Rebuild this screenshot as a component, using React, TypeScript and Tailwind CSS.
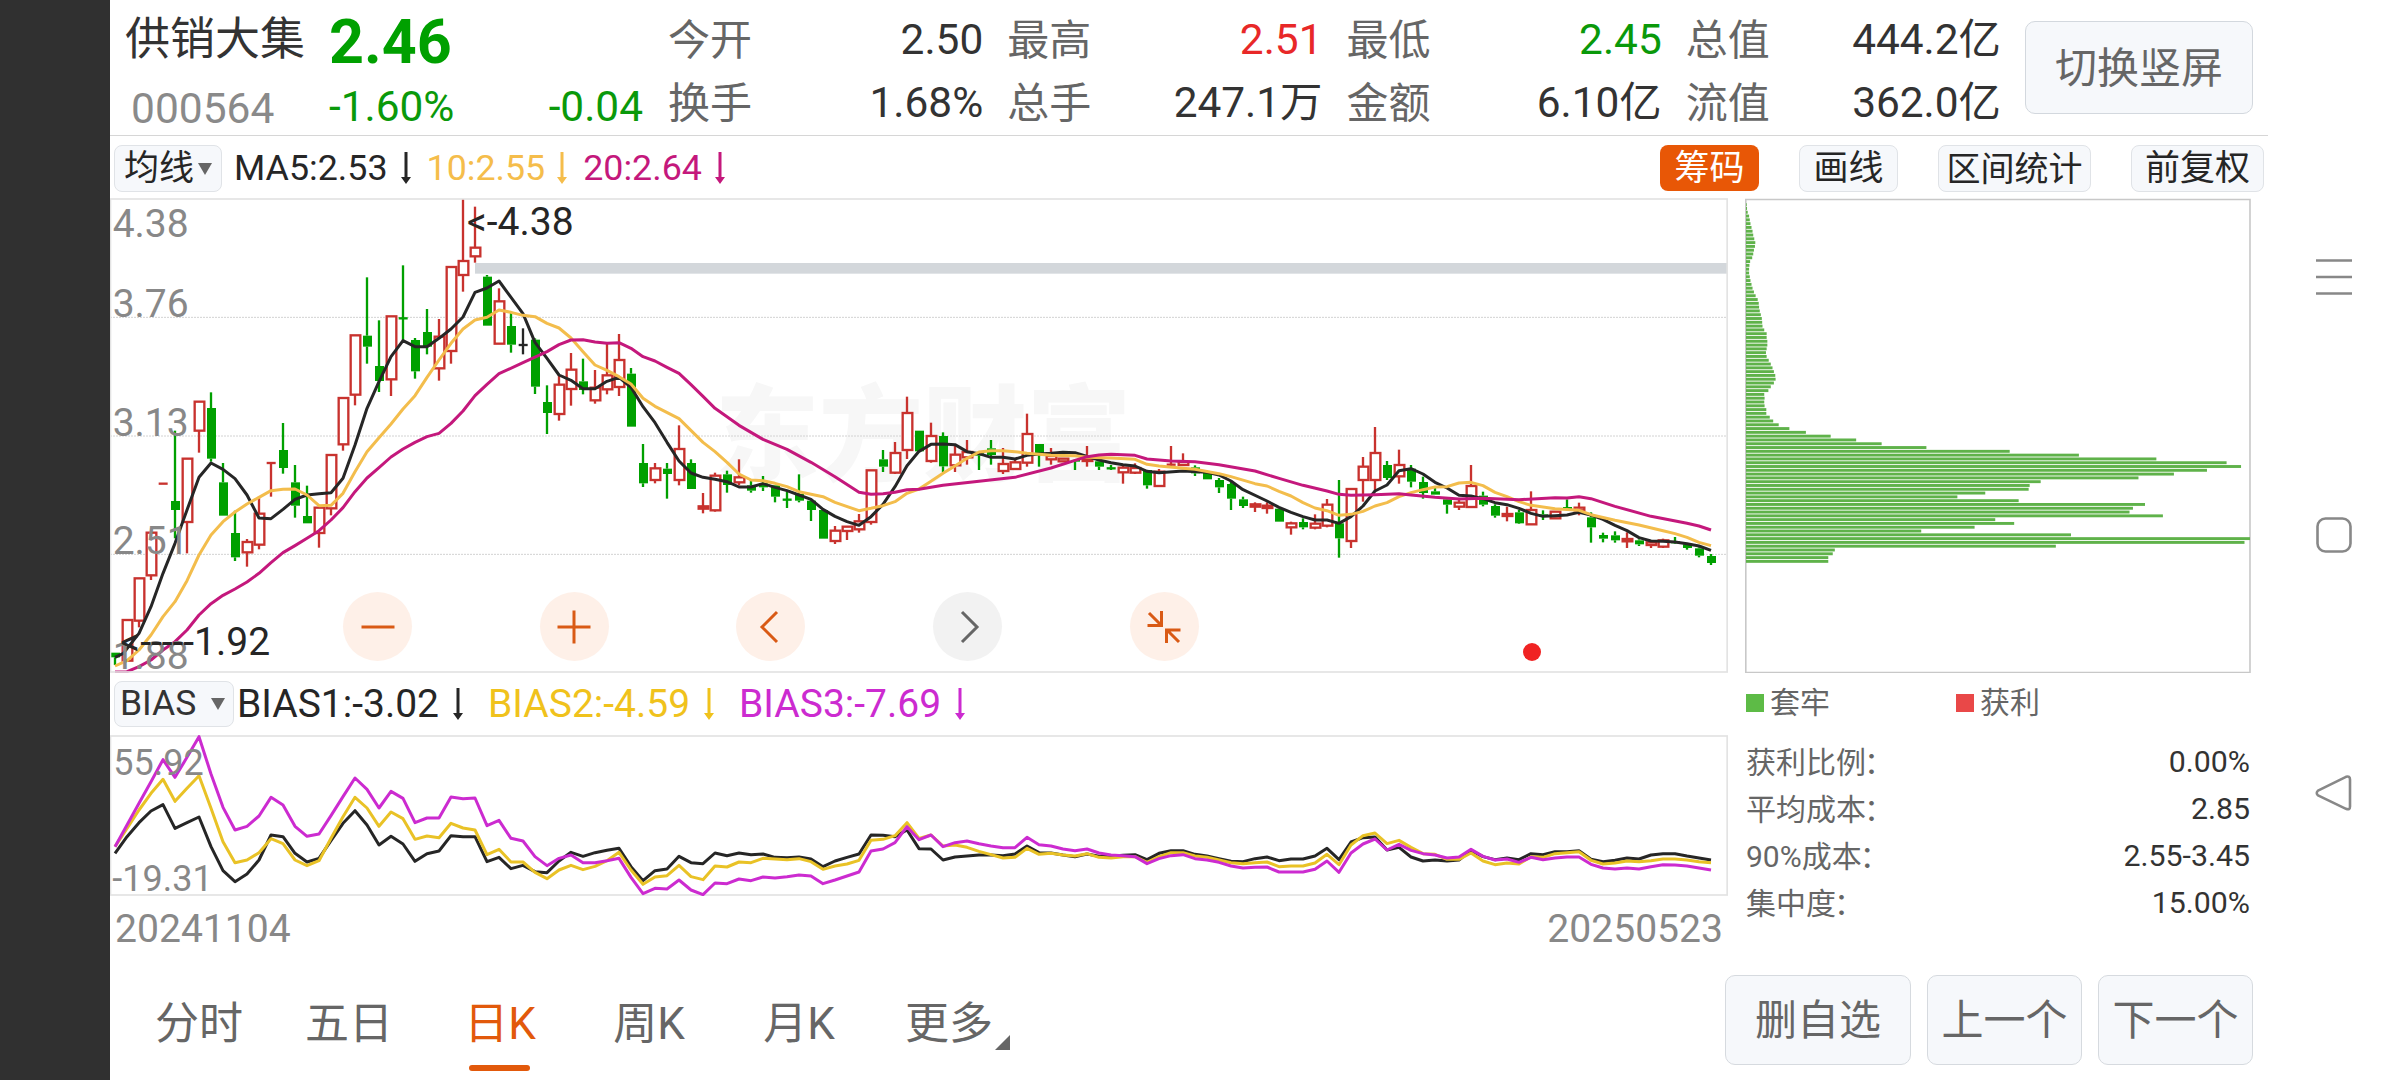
import React from 'react';

type CandleKind = 'up' | 'down' | 'flat';
// body top, body bottom, high, low (plot units, 3 per pixel)
type Candle = [CandleKind, number, number, number, number];

const CANDLES: Candle[] = [
  ['down', 1388, 1402, 1388, 1425], ['up', 1290, 1412, 1290, 1412], ['up', 1165, 1292, 1165, 1312],
  ['up', 1028, 1156, 1028, 1170], ['up', 881, 881, 881, 881], ['down', 933, 960, 722, 1045],
  ['up', 806, 996, 806, 1090], ['up', 635, 722, 635, 788], ['down', 654, 806, 607, 815],
  ['down', 877, 977, 819, 977], ['down', 1029, 1102, 962, 1113], ['up', 1056, 1087, 1047, 1130],
  ['up', 971, 1064, 920, 1078], ['up', 819, 819, 819, 920], ['down', 780, 834, 699, 851],
  ['down', 877, 947, 825, 983], ['down', 978, 1000, 887, 1000], ['up', 953, 1029, 953, 1073],
  ['up', 795, 955, 795, 976], ['up', 624, 763, 624, 782], ['up', 436, 614, 436, 646],
  ['down', 437, 470, 262, 521], ['down', 528, 573, 391, 606], ['up', 379, 568, 379, 618],
  ['down', 385, 385, 226, 450], ['down', 450, 544, 444, 566], ['down', 426, 470, 357, 493],
  ['up', 440, 535, 387, 572], ['up', 231, 483, 231, 521], ['up', 213, 255, 27, 305],
  ['up', 173, 199, 50, 218], ['down', 260, 407, 255, 407], ['up', 334, 461, 295, 461],
  ['down', 408, 464, 365, 488], ['flat', 465, 465, 415, 493], ['down', 449, 590, 445, 612],
  ['down', 636, 669, 586, 732], ['up', 584, 672, 553, 692], ['up', 539, 597, 489, 647],
  ['down', 574, 600, 506, 613], ['up', 593, 631, 540, 641], ['up', 556, 598, 460, 613],
  ['up', 510, 591, 432, 618], ['down', 551, 710, 534, 710], ['down', 819, 880, 762, 891],
  ['up', 835, 870, 819, 880], ['down', 836, 852, 819, 926], ['up', 777, 870, 706, 886],
  ['down', 819, 897, 808, 897], ['up', 949, 956, 909, 970], ['up', 857, 961, 848, 965],
  ['down', 853, 885, 842, 908], ['up', 862, 877, 808, 886], ['down', 886, 902, 870, 908],
  ['down', 880, 892, 858, 903], ['down', 886, 920, 886, 937], ['down', 929, 929, 905, 954],
  ['down', 912, 932, 853, 937], ['down', 932, 960, 930, 993], ['down', 960, 1046, 960, 1046],
  ['up', 1022, 1053, 1008, 1062], ['up', 1010, 1023, 1010, 1050], ['up', 994, 1018, 972, 1028],
  ['up', 841, 996, 841, 1004], ['down', 808, 830, 780, 846], ['up', 789, 848, 756, 852],
  ['up', 669, 780, 620, 807], ['down', 722, 784, 722, 784], ['up', 738, 813, 698, 818],
  ['down', 738, 829, 727, 846], ['up', 794, 826, 768, 846], ['up', 786, 802, 750, 824],
  ['down', 790, 797, 790, 840], ['down', 775, 795, 750, 824], ['up', 822, 843, 774, 852],
  ['up', 817, 837, 810, 840], ['up', 732, 818, 671, 830], ['down', 762, 790, 762, 830],
  ['up', 798, 808, 774, 824], ['up', 806, 814, 804, 816], ['down', 810, 815, 808, 840],
  ['up', 806, 813, 768, 830], ['down', 814, 830, 814, 840], ['down', 835, 835, 825, 840],
  ['up', 833, 847, 825, 881], ['up', 834, 848, 820, 852], ['down', 840, 886, 840, 896],
  ['up', 845, 888, 837, 888], ['up', 824, 824, 768, 832], ['up', 816, 825, 790, 826],
  ['down', 832, 850, 826, 858], ['down', 847, 868, 847, 868], ['down', 870, 892, 864, 909],
  ['down', 882, 926, 876, 960], ['down', 928, 948, 920, 954], ['up', 943, 950, 937, 966],
  ['up', 947, 954, 937, 971], ['down', 956, 995, 956, 995], ['up', 1000, 1012, 995, 1034],
  ['down', 996, 1012, 985, 1018], ['up', 1001, 1013, 973, 1018], ['up', 944, 1007, 927, 1012],
  ['down', 1000, 1045, 870, 1103], ['up', 897, 1053, 897, 1074], ['up', 830, 870, 801, 935],
  ['up', 789, 870, 711, 900], ['down', 825, 864, 813, 870], ['up', 825, 859, 779, 881],
  ['down', 836, 875, 825, 892], ['down', 876, 909, 860, 926], ['down', 904, 914, 892, 914],
  ['down', 928, 944, 922, 971], ['up', 938, 950, 930, 960], ['up', 888, 951, 825, 951],
  ['down', 917, 944, 905, 949], ['down', 948, 977, 943, 983], ['up', 972, 978, 950, 994],
  ['down', 967, 1000, 960, 1002], ['up', 960, 1003, 904, 1003], ['down', 973, 980, 961, 990],
  ['up', 965, 985, 965, 985], ['down', 951, 958, 928, 960], ['up', 953, 961, 938, 976],
  ['down', 982, 1012, 967, 1058], ['down', 1035, 1046, 1028, 1057], ['down', 1036, 1051, 1024, 1058],
  ['up', 1047, 1054, 1027, 1074], ['down', 1051, 1063, 1048, 1068], ['up', 1057, 1065, 1056, 1074],
  ['up', 1051, 1070, 1046, 1074], ['down', 1054, 1060, 1041, 1062], ['down', 1063, 1074, 1060, 1079],
  ['down', 1075, 1097, 1072, 1102], ['down', 1098, 1119, 1092, 1125],
];

const MA5 =
  '15,1402 40,1390 87,1330 123,1250 159,1150 195,1060 231,960 267,862 303,819 339,838 375,866 411,915 447,984 483,986 519,958 555,928 591,915 627,911 663,908 699,865 735,765 771,655 807,575 843,500 879,452 915,470 951,470 987,445 1023,417 1059,381 1095,307 1131,294 1167,273 1239,371 1275,457 1311,505 1347,555 1383,571 1419,596 1455,596 1491,574 1527,562 1563,592 1599,650 1635,698 1671,757 1707,813 1743,849 1779,862 1815,868 1851,875 1887,891 1923,891 1959,881 1995,892 2031,902 2067,915 2103,928 2139,958 2175,979 2211,995 2247,1006 2283,980 2319,943 2355,890 2391,827 2427,784 2463,763 2499,762 2535,764 2571,785 2607,791 2643,802 2679,802 2715,807 2751,796 2787,792 2823,790 2859,787 2895,788 2931,799 2967,810 3003,818 3039,824 3075,828 3111,844 3147,848 3219,843 3291,847 3327,855 3363,873 3399,899 3471,933 3507,952 3543,967 3579,980 3615,990 3651,990 3687,1000 3723,980 3759,948 3795,903 3831,885 3867,842 3903,836 3939,852 3975,877 4011,894 4047,916 4083,918 4119,926 4155,938 4191,944 4227,955 4263,970 4299,979 4335,977 4371,975 4407,967 4443,975 4479,988 4515,1006 4551,1022 4587,1043 4623,1053 4659,1054 4695,1056 4731,1061 4767,1068 4803,1081';
const MA10 =
  '15,1428 51,1412 87,1380 123,1335 159,1280 195,1235 231,1172 267,1095 303,1035 339,995 375,966 411,942 447,922 483,902 519,898 555,897 591,915 627,947 663,946 699,910 735,845 771,785 807,743 843,702 879,657 915,617 951,562 987,510 1023,460 1059,417 1095,390 1131,382 1167,360 1203,367 1239,376 1275,380 1311,400 1347,414 1383,444 1419,485 1455,525 1491,541 1527,560 1563,582 1599,625 1635,649 1707,686 1779,757 1815,785 1851,817 1887,852 1923,870 1959,872 1995,880 2031,890 2067,905 2139,920 2175,937 2247,962 2283,955 2319,947 2355,935 2391,910 2427,897 2463,874 2499,850 2535,828 2571,805 2607,786 2643,782 2679,782 2715,785 2751,790 2823,796 2895,797 2931,802 3003,804 3075,808 3111,823 3147,828 3219,835 3255,838 3327,851 3363,860 3435,881 3471,888 3507,904 3543,918 3579,938 3615,954 3651,962 3687,976 3723,973 3759,964 3795,948 3831,938 3867,920 3903,908 3939,899 3975,891 4011,890 4047,879 4083,877 4119,887 4155,907 4191,920 4227,935 4263,946 4335,956 4407,961 4443,974 4515,991 4587,1005 4659,1022 4695,1031 4731,1042 4767,1057 4803,1067';
const MA20 =
  '15,1446 51,1445 87,1430 123,1410 159,1380 195,1355 231,1320 267,1275 303,1241 339,1216 375,1197 411,1176 447,1150 483,1118 519,1088 555,1067 591,1045 627,1022 663,990 699,953 735,905 771,864 807,833 843,801 879,777 915,757 951,740 987,730 1023,700 1059,663 1095,617 1131,583 1167,551 1239,518 1311,485 1347,464 1383,450 1419,449 1455,456 1491,460 1527,458 1563,475 1599,500 1635,513 1671,532 1707,550 1743,584 1779,619 1815,655 1851,680 1887,706 1959,748 2031,778 2103,817 2175,860 2247,907 2283,913 2319,911 2355,907 2391,899 2427,898 2499,886 2607,874 2715,862 2823,834 2895,811 2931,800 2967,795 3003,793 3075,796 3111,807 3183,813 3255,815 3327,824 3435,843 3510,866 3579,886 3651,903 3687,913 3723,916 3795,914 3867,911 3903,915 3975,922 4047,927 4119,925 4227,929 4335,923 4371,924 4407,920 4443,926 4515,949 4623,979 4731,1000 4767,1008 4803,1020';

const BIAS1 = [
  550, 500, 458, 423, 404, 475, 458, 441, 530, 602, 635, 612, 570, 495, 500, 550, 576, 565, 512, 460,
  422, 465, 525, 499, 522, 574, 551, 543, 497, 500, 500, 575, 562, 596, 586, 605, 608, 573, 547, 559,
  548, 541, 535, 590, 632, 602, 597, 559, 578, 581, 549, 557, 549, 554, 552, 562, 563, 561, 567, 590,
  573, 562, 552, 495, 496, 500, 480, 536, 537, 570, 561, 558, 555, 555, 557, 552, 528, 548, 549, 555,
  560, 552, 559, 559, 556, 554, 569, 550, 542, 542, 553, 558, 566, 574, 575, 566, 561, 572, 567, 567,
  558, 535, 569, 516, 503, 501, 540, 532, 561, 573, 570, 573, 570, 541, 560, 569, 564, 569, 551, 554,
  545, 545, 542, 568, 575, 571, 564, 567, 555, 551, 551, 558, 564, 570,
];
const BIAS2 = [
  530, 475, 420, 370, 328, 394, 355, 317, 415, 515, 578, 570, 548, 506, 521, 570, 587, 572, 505, 440,
  382, 414, 469, 426, 446, 508, 498, 503, 460, 474, 480, 554, 538, 576, 576, 607, 626, 600, 586, 599,
  589, 572, 547, 600, 643, 621, 617, 586, 620, 629, 588, 591, 576, 578, 565, 567, 569, 566, 575, 598,
  588, 582, 571, 511, 508, 497, 458, 505, 495, 528, 525, 532, 544, 554, 564, 562, 535, 553, 550, 555,
  558, 551, 562, 564, 560, 560, 577, 560, 548, 548, 558, 562, 570, 578, 581, 578, 576, 590, 588, 588,
  579, 553, 584, 525, 497, 489, 521, 511, 532, 551, 553, 568, 568, 549, 573, 584, 579, 582, 560, 562,
  551, 548, 545, 571, 582, 579, 573, 575, 572, 567, 567, 570, 575, 578,
];
const BIAS3 = [
  530, 465, 400, 335, 269, 322, 262, 200, 312, 412, 480, 469, 438, 382, 405, 469, 499, 492, 437, 380,
  324, 358, 414, 364, 385, 458, 444, 444, 381, 386, 384, 467, 451, 505, 513, 560, 587, 565, 555, 578,
  578, 572, 565, 622, 671, 655, 657, 630, 660, 674, 639, 641, 627, 632, 621, 624, 620, 615, 618, 641,
  630, 618, 606, 543, 537, 518, 470, 509, 495, 530, 518, 513, 521, 528, 533, 533, 502, 524, 528, 537,
  542, 537, 549, 555, 557, 560, 581, 566, 557, 554, 566, 570, 577, 588, 594, 592, 591, 606, 606, 606,
  598, 573, 607, 549, 522, 507, 540, 523, 541, 551, 555, 564, 561, 538, 559, 570, 567, 577, 562, 569,
  564, 561, 561, 583, 594, 597, 594, 597, 590, 584, 585, 588, 594, 600,
];

// Chip distribution, one bar per price level from the top down
const CHIPS = [
  2, 3, 5, 9, 11, 13, 16, 19, 21, 24, 27, 26, 23, 21, 18, 12, 10, 9, 9, 11, 13, 16, 19, 23, 28, 34, 37,
  38, 40, 43, 46, 47, 48, 53, 60, 60, 62, 62, 60, 58, 60, 66, 72, 77, 81, 85, 86, 81, 72, 65, 53, 54,
  53, 54, 59, 59, 69, 79, 95, 126, 174, 246, 320, 394, 524, 766, 967, 1192, 1396, 1438, 1339, 1243,
  1140, 856, 824, 821, 695, 614, 792, 1159, 1124, 1114, 1211, 724, 779, 664, 509, 944, 1464, 1448, 900,
  258, 252, 239, 239,
];

const STATS = [
  { label: '今开', value: '2.50', color: 'text-[#333]' },
  { label: '最高', value: '2.51', color: 'text-[#e82828]' },
  { label: '最低', value: '2.45', color: 'text-[#0a990a]' },
  { label: '总值', value: '444.2亿', color: 'text-[#333]' },
  { label: '换手', value: '1.68%', color: 'text-[#333]' },
  { label: '总手', value: '247.1万', color: 'text-[#333]' },
  { label: '金额', value: '6.10亿', color: 'text-[#333]' },
  { label: '流值', value: '362.0亿', color: 'text-[#333]' },
];

const COST_ROWS = [
  { label: '获利比例', value: '0.00%' },
  { label: '平均成本', value: '2.85' },
  { label: '90%成本', value: '2.55-3.45' },
  { label: '集中度', value: '15.00%' },
];

const TABS = ['分时', '五日', '日K', '周K', '月K', '更多'];

const UP = '#c8322e';
const DOWN = '#00a000';

const xAt = (i: number) => 15 + 36 * i;
const toPoints = (values: number[]) => values.map((v, i) => `${xAt(i)},${v}`).join(' ');

function CandleMark({ index, candle }: { index: number; candle: Candle }) {
  const [kind, top, bottom, high, low] = candle;
  const x = xAt(index);
  const color = kind === 'up' ? UP : kind === 'down' ? DOWN : '#262626';
  const height = bottom - top;

  return (
    <g stroke={color} strokeWidth={7}>
      {high < top && <line x1={x} x2={x} y1={high} y2={top} />}
      {low > bottom && <line x1={x} x2={x} y1={bottom} y2={low} />}
      {height === 0 && <line x1={x - 13} x2={x + 14} y1={top} y2={top} />}
      {height > 0 && kind === 'down' && (
        <rect x={x - 12} y={top} width={27} height={height} fill={color} stroke="none" />
      )}
      {height > 0 && kind === 'up' && (
        <rect x={x - 13} y={top} width={29} height={height} fill="#fff" />
      )}
    </g>
  );
}

function PriceChart() {
  return (
    <svg viewBox="0 24 4854 1425" className="block h-[475px] w-[1618px] font-[Roboto]">
      <text
        x={1815}
        y={850}
        fontSize={312}
        fontWeight={900}
        fill="#f7f7f7"
        fontFamily="'Noto Sans CJK SC', sans-serif"
      >
        东方财富
      </text>
      {[382, 738, 1093].map((y) => (
        <line key={y} x1={0} x2={4851} y1={y} y2={y} stroke="#d2d2d2" strokeWidth={3} strokeDasharray="6 3" />
      ))}
      <rect x={1095} y={219} width={3756} height={32} fill="#d3d7db" />
      {CANDLES.map((candle, i) => (
        <CandleMark key={i} index={i} candle={candle} />
      ))}
      <g fill="none" strokeWidth={9} strokeLinejoin="round">
        <polyline points={MA5} stroke="#262626" />
        <polyline points={MA10} stroke="#f3bd4c" />
        <polyline points={MA20} stroke="#c4187c" />
      </g>
      <g fontSize={117} fill="#888">
        <text x={8} y={140}>4.38</text>
        <text x={8} y={381}>3.76</text>
        <text x={8} y={738}>3.13</text>
        <text x={8} y={1092}>2.51</text>
        <text x={8} y={1436}>1.88</text>
      </g>
      <g fontSize={117} fill="#262626">
        <text x={1071} y={134}>&lt;-4.38</text>
        <text x={31} y={1394}>&lt;-----1.92</text>
      </g>
      <circle cx={4266} cy={1386} r={27} fill="#f02323" />
      <rect x={1.5} y={27} width={4850} height={1419} fill="none" stroke="#e3e3e3" strokeWidth={5} />
    </svg>
  );
}

function BiasChart() {
  return (
    <svg viewBox="0 195 4854 483" className="block h-[161px] w-[1618px] font-[Roboto]">
      <rect x={1.5} y={198} width={4850} height={477} fill="none" stroke="#e3e3e3" strokeWidth={5} />
      <g fill="none" strokeWidth={9} strokeLinejoin="round">
        <polyline points={toPoints(BIAS1)} stroke="#262626" />
        <polyline points={toPoints(BIAS2)} stroke="#e9c226" />
        <polyline points={toPoints(BIAS3)} stroke="#cc2bd0" />
      </g>
      <g fontSize={108} fill="#888">
        <text x={10} y={314}>55.92</text>
        <text x={7} y={662}>-19.31</text>
      </g>
    </svg>
  );
}

function ChipChart() {
  return (
    <svg viewBox="-1 0 506 475" className="block h-[475px] w-[506px]">
      <path d="M-0.2 1.5H504V474.5H-0.2Z" fill="none" stroke="#c8c8c8" strokeWidth={1.6} />
      {CHIPS.map((w, i) => (
        <rect key={i} x={0} y={5.2 + i * 3.795} width={(w * 504) / 1464} height={2.9} fill="#5fb24a" />
      ))}
    </svg>
  );
}

function DownArrow() {
  return (
    <svg viewBox="0 0 10 32" className="h-8 w-2.5" fill="currentColor">
      <path d="M3.5 0H6.5V25H10L5 32L0 25H3.5Z" />
    </svg>
  );
}

function Caret() {
  return (
    <svg viewBox="0 0 14 12" className="h-3 w-3.5" fill="#666">
      <path d="M0 0H14L7 12Z" />
    </svg>
  );
}

function RoundButton({ muted = false, d }: { muted?: boolean; d: string }) {
  return (
    <button
      type="button"
      className={`flex size-[69px] items-center justify-center rounded-full ${
        muted ? 'bg-[#f2f2f2] text-[#666]' : 'bg-[#fef0e8] text-[#d95a15]'
      }`}
    >
      <svg viewBox="0 0 36 36" className="size-9" fill="none" stroke="currentColor" strokeWidth={3}>
        <path d={d} />
      </svg>
    </button>
  );
}

function Header() {
  return (
    <header className="flex h-[136px] border-b border-[#d6d6d6]">
      <div className="ml-[15px] grid w-[543px] grid-cols-[204px_314px] grid-rows-[76px_60px] items-center">
        <span className="pt-[3px] text-[45px] text-[#333]">供销大集</span>
        <span className="pt-2 text-[61px] font-bold text-[#00a000]">2.46</span>
        <span className="pl-1.5 pt-1.5 text-[42.5px] text-[#8a8a8a]">000564</span>
        <div className="flex justify-between pt-0.5 text-[42.4px] text-[#0a990a]">
          <span>-1.60%</span>
          <span>-0.04</span>
        </div>
      </div>
      <dl className="grid w-[1333px] grid-cols-4 grid-rows-[63px_63px] gap-x-6 pt-[9px] text-[42.4px]">
        {STATS.map(({ label, value, color }) => (
          <div key={label} className="flex items-center justify-between">
            <dt className="text-[42px] text-[#666]">{label}</dt>
            <dd className={color}>{value}</dd>
          </div>
        ))}
      </dl>
      <button
        type="button"
        className="ml-6 mt-[21px] flex h-[93px] w-[228px] items-center justify-center rounded-[10px] border border-[#d3d8de] bg-[#f6f8fb] pt-[3px] text-[42px] text-[#666]"
      >
        切换竖屏
      </button>
    </header>
  );
}

function Toolbar() {
  const small =
    'flex h-[47px] items-center justify-center rounded-lg border border-[#e0e3e7] bg-[#f6f8fb] text-[#262626]';

  return (
    <div className="flex h-[62px] items-center pl-1 pt-[3px] text-[35.8px]">
      <button type="button" className={`${small} w-[108px] gap-1 text-[35px]`}>
        均线
        <Caret />
      </button>
      <div className="ml-3 flex items-center text-[#262626]">
        <span className="mr-[13px]">MA5:2.53</span>
        <DownArrow />
      </div>
      <div className="ml-4 flex items-center text-[#f5bd4b]">
        <span className="mr-3">10:2.55</span>
        <DownArrow />
      </div>
      <div className="ml-4 flex items-center text-[#c4187c]">
        <span className="mr-[13px]">20:2.64</span>
        <DownArrow />
      </div>
      <div className="ml-auto mr-1 flex gap-10 text-[35px]">
        <button
          type="button"
          className="flex h-[46px] w-[99px] items-center justify-center rounded-lg bg-[#e85706] text-white"
        >
          筹码
        </button>
        <button type="button" className={`${small} w-[99px]`}>画线</button>
        <button type="button" className={`${small} w-[153px] text-[34px]`}>区间统计</button>
        <button type="button" className={`${small} w-[133px]`}>前复权</button>
      </div>
    </div>
  );
}

function ChartColumn() {
  return (
    <section className="w-[1618px]">
      <div className="relative">
        <PriceChart />
        <div className="absolute left-[233px] top-[394px] flex gap-[127.7px]">
          <RoundButton d="M1.5 18H34.5" />
          <RoundButton d="M1.5 18H34.5M18 1.5V34.5" />
          <RoundButton d="M24 3L9 18L24 33" />
          <RoundButton muted d="M12 3L27 18L12 33" />
          <RoundButton d="M3 4L15 16M1.5 16.5H15.5V2M33 33L21 21M20.5 34V21H34.5" />
        </div>
      </div>
      <div className="flex h-[62px] items-center pl-1 text-[39px]">
        <button
          type="button"
          className="flex h-[46px] w-[120px] items-center justify-between rounded-lg border border-[#e0e3e7] bg-[#f6f8fb] pl-[5px] pr-2 text-[35.5px] text-[#333]"
        >
          BIAS
          <Caret />
        </button>
        <div className="ml-[3px] flex items-center text-[#262626]">
          <span className="mr-3.5">BIAS1:-3.02</span>
          <DownArrow />
        </div>
        <div className="ml-[25px] flex items-center text-[#f0c21c]">
          <span className="mr-3.5">BIAS2:-4.59</span>
          <DownArrow />
        </div>
        <div className="ml-[25px] flex items-center text-[#cc2bd0]">
          <span className="mr-3.5">BIAS3:-7.69</span>
          <DownArrow />
        </div>
      </div>
      <BiasChart />
      <div className="flex justify-between pl-[5px] pr-[5px] pt-2 text-[39.1px] leading-[50px] text-[#888]">
        <span>20241104</span>
        <span>20250523</span>
      </div>
    </section>
  );
}

function ChipColumn() {
  return (
    <section className="w-[506px] text-[30px]">
      <ChipChart />
      <div className="flex h-[58px] items-center pl-px pt-px text-[#666]">
        <div className="flex w-[210px] items-center gap-1.5">
          <span className="size-[18px] bg-[#5dbb46]" />
          套牢
        </div>
        <div className="flex items-center gap-1.5">
          <span className="size-[18px] bg-[#e94848]" />
          获利
        </div>
      </div>
      <dl className="pl-px pr-px pt-2">
        {COST_ROWS.map(({ label, value }) => (
          <div key={label} className="flex h-[47px] items-center justify-between">
            <dt className="text-[#666]">
              {label}
              <span className="-ml-0.5">：</span>
            </dt>
            <dd className="text-[30.3px] text-[#333]">{value}</dd>
          </div>
        ))}
      </dl>
    </section>
  );
}

function BottomBar() {
  const btn =
    'flex h-[90px] items-center justify-center rounded-[10px] border border-[#d6dadf] bg-[#f6f8fb] pt-0.5 text-[42px] text-[#666]';

  return (
    <footer className="mt-auto flex h-[105px] pl-3.5 pr-[15px] text-[44px]">
      <nav className="flex h-full">
        {TABS.map((tab) => {
          const active = tab === '日K';
          return (
            <div
              key={tab}
              className={`relative flex h-[94px] w-[150px] items-center justify-center pt-[3px] ${
                active ? 'pl-0.5 text-[#e2590b]' : 'text-[#666]'
              }`}
            >
              {tab}
              {active && (
                <span className="absolute -bottom-0.5 left-[45px] h-1.5 w-[61px] rounded-full bg-[#e2590b]" />
              )}
              {tab === '更多' && (
                <svg viewBox="0 0 15 15" className="absolute bottom-[19px] right-[14px] size-[15px]" fill="#666">
                  <path d="M15 0V15H0Z" />
                </svg>
              )}
            </div>
          );
        })}
      </nav>
      <div className="ml-auto flex gap-4">
        <button type="button" className={`${btn} w-[186px]`}>删自选</button>
        <button type="button" className={`${btn} w-[155px]`}>上一个</button>
        <button type="button" className={`${btn} w-[155px]`}>下一个</button>
      </div>
    </footer>
  );
}

function SystemNav() {
  return (
    <aside className="flex w-[132px] flex-col items-center pt-[257px]">
      <svg viewBox="0 0 40 40" className="size-10" fill="none" stroke="#888" strokeWidth={2.6}>
        <path d="M2 3.5H38M2 20H38M2 36.5H38" />
      </svg>
      <svg viewBox="0 0 40 40" className="mt-[218px] size-10" fill="none" stroke="#888" strokeWidth={2.6}>
        <rect x={3.5} y={3.5} width={33} height={33} rx={8} />
      </svg>
      <svg
        viewBox="0 0 40 40"
        className="mt-[218px] size-10"
        fill="none"
        stroke="#888"
        strokeWidth={2.6}
        strokeLinejoin="round"
      >
        <path d="M4 17.6L32 3.8Q36 2.5 36 6.5V33.5Q36 37.5 32 35.8L4 22.4Q1.5 20 4 17.6Z" />
      </svg>
    </aside>
  );
}

export default function App() {
  return (
    <div
      lang="zh-CN"
      className="flex h-[1080px] w-[2400px] overflow-hidden whitespace-nowrap bg-white font-[Roboto,'Noto_Sans_CJK_SC',sans-serif] leading-none"
    >
      <div className="w-[110px] bg-[#303030]" />
      <main className="flex w-[2158px] flex-col">
        <Header />
        <Toolbar />
        <div className="flex gap-[17px]">
          <ChartColumn />
          <ChipColumn />
        </div>
        <BottomBar />
      </main>
      <SystemNav />
    </div>
  );
}
